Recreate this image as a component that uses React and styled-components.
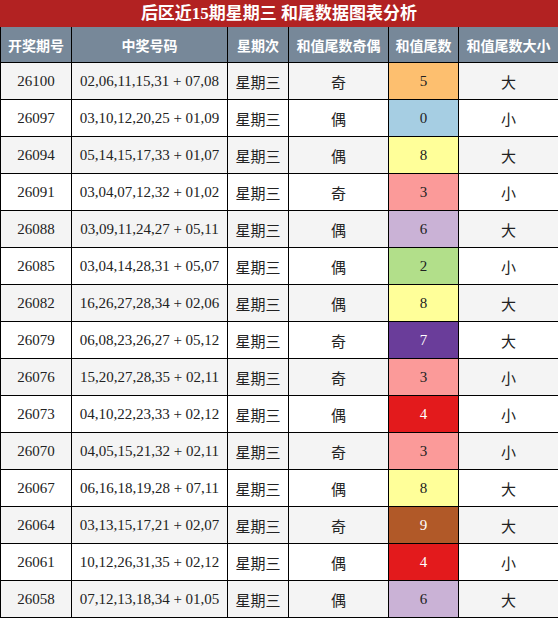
import React from 'react'
import styled, { createGlobalStyle } from 'styled-components'

const GlobalStyle = createGlobalStyle`
    html, body {
        margin: 0;
        padding: 0;
        background: #fff;
    }
    body {
        font-family: "Liberation Serif", "Noto Sans CJK SC", serif;
    }
`

const rows = [
    ['26100', '02,06,11,15,31 + 07,08', '奇', 5, '大'],
    ['26097', '03,10,12,20,25 + 01,09', '偶', 0, '小'],
    ['26094', '05,14,15,17,33 + 01,07', '偶', 8, '大'],
    ['26091', '03,04,07,12,32 + 01,02', '奇', 3, '小'],
    ['26088', '03,09,11,24,27 + 05,11', '偶', 6, '大'],
    ['26085', '03,04,14,28,31 + 05,07', '偶', 2, '小'],
    ['26082', '16,26,27,28,34 + 02,06', '偶', 8, '大'],
    ['26079', '06,08,23,26,27 + 05,12', '奇', 7, '大'],
    ['26076', '15,20,27,28,35 + 02,11', '奇', 3, '小'],
    ['26073', '04,10,22,23,33 + 02,12', '偶', 4, '小'],
    ['26070', '04,05,15,21,32 + 02,11', '奇', 3, '小'],
    ['26067', '06,16,18,19,28 + 07,11', '偶', 8, '大'],
    ['26064', '03,13,15,17,21 + 02,07', '奇', 9, '大'],
    ['26061', '10,12,26,31,35 + 02,12', '偶', 4, '小'],
    ['26058', '07,12,13,18,34 + 01,05', '偶', 6, '大'],
]

// paired palette, one colour per tail digit
const tailColors = {
    0: ['#a6cee3', '#222'],
    1: ['#1f78b4', '#fff'],
    2: ['#b2df8a', '#222'],
    3: ['#fb9a99', '#222'],
    4: ['#e31a1c', '#fff'],
    5: ['#fdbf6f', '#222'],
    6: ['#cab2d6', '#222'],
    7: ['#6a3d9a', '#fff'],
    8: ['#ffff99', '#222'],
    9: ['#b15928', '#fff'],
}

const widths = [71, 156, 61, 100, 70, 100]

function App() {
    return (
        <Wrapper>
            <GlobalStyle />
            <Title>后区近15期星期三 和尾数据图表分析</Title>
            <Table>
                <colgroup>
                    {widths.map((w, i) => <col key={i} style={{ width: w }} />)}
                </colgroup>
                <thead>
                    <tr>
                        <Th>开奖期号</Th>
                        <Th>中奖号码</Th>
                        <Th>星期次</Th>
                        <Th>和值尾数奇偶</Th>
                        <Th>和值尾数</Th>
                        <Th>和值尾数大小</Th>
                    </tr>
                </thead>
                <tbody>
                    {rows.map((r, i) => (
                        <Row key={r[0]} $odd={i % 2 === 0}>
                            <Td>{r[0]}</Td>
                            <Td>{r[1]}</Td>
                            <Td>星期三</Td>
                            <Td>{r[2]}</Td>
                            <TailCell $bg={tailColors[r[3]][0]} $fg={tailColors[r[3]][1]}>{r[3]}</TailCell>
                            <Td>{r[4]}</Td>
                        </Row>
                    ))}
                </tbody>
            </Table>
        </Wrapper>
    )
}

export default App

const Wrapper = styled.div`
    width: 558px;
`
const Title = styled.div`
    height: 27px;
    line-height: 28px;
    background: #b22222;
    color: #fff;
    font-weight: bold;
    font-size: 17px;
    text-align: center;
`
const Table = styled.table`
    width: 558px;
    table-layout: fixed;
    border-collapse: collapse;
`
const Th = styled.th`
    height: 35px;
    padding: 0;
    background: #778899;
    color: #fff;
    font-size: 14px;
    font-weight: bold;
    text-align: center;
    border: 1px solid #000;
    border-top: none;
`
const Row = styled.tr`
    background: ${p => (p.$odd ? '#f4f4f4' : '#fff')};
`
const Td = styled.td`
    height: 36px;
    padding: 0;
    font-size: 15px;
    color: #222;
    text-align: center;
    border: 1px solid #000;
`
const TailCell = styled(Td)`
    background: ${p => p.$bg};
    color: ${p => p.$fg};
`
